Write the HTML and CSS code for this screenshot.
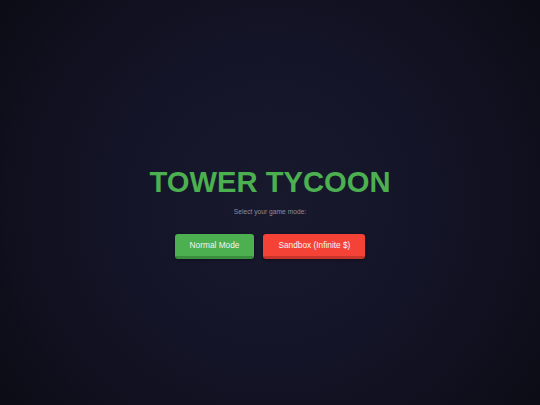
FILE: index.html
```html
<!DOCTYPE html>
<html lang="en">
<head>
<meta charset="utf-8">
<title>Tower Tycoon</title>
<link rel="stylesheet" href="styles.css">
</head>
<body>
<main class="menu">
  <h1 class="title">TOWER TYCOON</h1>
  <p class="subtitle">Select your game mode:</p>
  <div class="modes">
    <button class="mode-btn mode-normal">Normal Mode</button>
    <button class="mode-btn mode-sandbox">Sandbox (Infinite $)</button>
  </div>
</main>
</body>
</html>
```
FILE: styles.css
```css
html, body {
  margin: 0;
  padding: 0;
  height: 100%;
}
body {
  background: radial-gradient(circle at 50% 50%, #19192e 0%, #15152a 40%, #0c0c16 100%);
  font-family: "Liberation Sans", Arial, sans-serif;
  overflow: hidden;
}
.menu {
  box-sizing: border-box;
  height: 100%;
  display: flex;
  flex-direction: column;
  align-items: center;
  padding-top: 168px;
}
.title {
  margin: 0;
  font-size: 29.2px;
  line-height: 29px;
  font-weight: bold;
  color: #4caf50;
}
.subtitle {
  margin: 11px 0 0;
  font-size: 6.7px;
  line-height: 8px;
  color: #8c8c9a;
}
.modes {
  display: flex;
  gap: 9px;
  margin-top: 18px;
}
.mode-btn {
  font-family: "Liberation Sans", Arial, sans-serif;
  font-size: 8.3px;
  line-height: 10px;
  padding: 6px 15px;
  border: none;
  border-bottom: 3px solid;
  border-radius: 3px;
  color: #f4f4f4;
  cursor: pointer;
  box-shadow: 0 1px 3px rgba(0, 0, 0, 0.4);
}
.mode-normal {
  background: #4caf50;
  border-bottom-color: #3b8e3f;
}
.mode-sandbox {
  background: #f44336;
  border-bottom-color: #c8352b;
}
```
